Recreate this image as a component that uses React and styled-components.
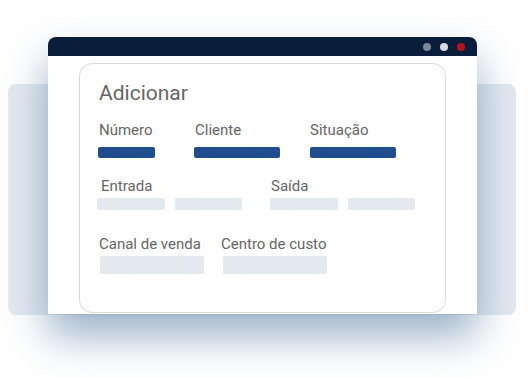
import React from "react";
import styled, { createGlobalStyle } from "styled-components";

const Global = createGlobalStyle`
  html, body { margin: 0; padding: 0; background: #ffffff; }
  body { font-family: Roboto, "Liberation Sans", sans-serif; }
`;

const Stage = styled.div`
  position: relative;
  width: 530px;
  height: 378px;
  padding: 37px 0 0 48px;
  box-sizing: border-box;
  overflow: hidden;

  &::before {
    content: "";
    position: absolute;
    left: 8px;
    top: 84px;
    width: 508px;
    height: 231px;
    border-radius: 8px;
    background: #e3e9f0;
  }
`;

const Window = styled.div`
  position: relative;
  width: 429px;
  height: 277px;
  background: #ffffff;
  border-radius: 8px 8px 0 0;
  box-shadow: 0 22px 42px 0 rgba(55, 100, 145, 0.5);
  display: flex;
  flex-direction: column;
`;

const TitleBar = styled.div`
  height: 18px;
  background: #0a1e3c;
  border-radius: 8px 8px 0 0;
  display: flex;
  align-items: center;
  justify-content: flex-end;
  gap: 9px;
  padding-right: 12px;
  padding-top: 1px;
`;

const Dot = styled.span`
  width: 8px;
  height: 8px;
  border-radius: 50%;
  background: ${(p) => p.$color};
`;

const Body = styled.div`
  flex: 1;
  padding: 7px 0 0 31px;
`;

const Card = styled.div`
  width: 367px;
  height: 250px;
  box-sizing: border-box;
  border: 1px solid #d9d9d9;
  border-radius: 13px;
  padding: 17px 0 0 18px;
`;

const Title = styled.div`
  font-size: 21px;
  line-height: 25px;
  color: #666666;
  margin-left: 1px;
`;

const Row = styled.div`
  display: flex;
  align-items: flex-start;
  margin-top: ${(p) => p.$mt}px;
  margin-left: ${(p) => p.$ml || 0}px;
  gap: ${(p) => p.$gap || 0}px;
`;

const Field = styled.div`
  display: flex;
  flex-direction: column;
  width: ${(p) => (p.$w ? `${p.$w}px` : "auto")};
`;

const Label = styled.div`
  font-size: 15px;
  line-height: 18px;
  color: #666666;
  white-space: nowrap;
  margin-left: ${(p) => p.$ml || 0}px;
`;

const Bars = styled.div`
  display: flex;
  gap: 10px;
  margin-top: ${(p) => p.$mt}px;
`;

const Bar = styled.div`
  width: ${(p) => p.$w}px;
  height: ${(p) => p.$h}px;
  border-radius: 2px;
  background: ${(p) => (p.$filled ? "#1f4d8d" : "#e4e8ef")};
`;

export default function App() {
  return (
    <>
      <Global />
      <Stage>
        <Window>
          <TitleBar>
            <Dot $color="#7c8797" />
            <Dot $color="#d6dae0" />
            <Dot $color="#b71417" />
          </TitleBar>
          <Body>
            <Card>
              <Title>Adicionar</Title>
              <Row $mt={15}>
                <Field $w={96}>
                  <Label $ml={1}>Número</Label>
                  <Bars $mt={8}>
                    <Bar $filled $w={57} $h={11} />
                  </Bars>
                </Field>
                <Field $w={116}>
                  <Label $ml={1}>Cliente</Label>
                  <Bars $mt={8}>
                    <Bar $filled $w={86} $h={11} />
                  </Bars>
                </Field>
                <Field>
                  <Label>Situação</Label>
                  <Bars $mt={8}>
                    <Bar $filled $w={86} $h={11} />
                  </Bars>
                </Field>
              </Row>
              <Row $mt={19} $gap={28} $ml={-1}>
                <Field>
                  <Label $ml={4}>Entrada</Label>
                  <Bars $mt={3}>
                    <Bar $w={68} $h={12} />
                    <Bar $w={67} $h={12} />
                  </Bars>
                </Field>
                <Field>
                  <Label $ml={1}>Saída</Label>
                  <Bars $mt={3}>
                    <Bar $w={68} $h={12} />
                    <Bar $w={67} $h={12} />
                  </Bars>
                </Field>
              </Row>
              <Row $mt={25} $gap={19} $ml={2}>
                <Field>
                  <Label $ml={-1}>Canal de venda</Label>
                  <Bars $mt={3}>
                    <Bar $w={104} $h={18} />
                  </Bars>
                </Field>
                <Field>
                  <Label $ml={-2}>Centro de custo</Label>
                  <Bars $mt={3}>
                    <Bar $w={104} $h={18} />
                  </Bars>
                </Field>
              </Row>
            </Card>
          </Body>
        </Window>
      </Stage>
    </>
  );
}
